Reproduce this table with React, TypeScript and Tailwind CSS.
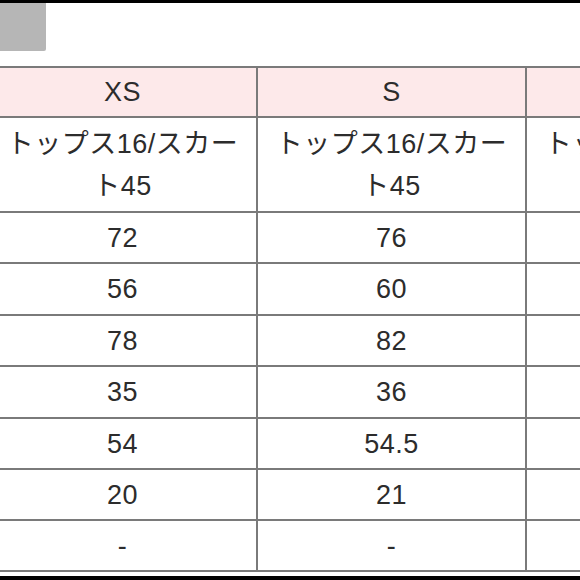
import React from "react";

const sizes = ["XS", "S", ""];
const rows: string[][] = [
  ["トップス16/スカート45", "トップス16/スカート45", "トップス16/スカート45"],
  ["72", "76", ""],
  ["56", "60", ""],
  ["78", "82", ""],
  ["35", "36", ""],
  ["54", "54.5", ""],
  ["20", "21", ""],
  ["-", "-", ""],
];
const heights = ["h-[95px]", "h-[51px]", "h-[52px]", "h-[51px]", "h-[52px]", "h-[51px]", "h-[51px]", "h-[51px]"];

export default function App() {
  return (
    <div
      className="w-[580px] h-[580px] overflow-hidden bg-white flex flex-col relative text-[#2c2c2c]"
      style={{ fontFamily: '"Liberation Sans", "Noto Sans CJK JP", sans-serif' }}
    >
      <div className="h-[3px] bg-black shrink-0" />
      <div className="h-[63px] shrink-0">
        <div className="w-[46px] h-[48px] bg-[#b6b6b6] rounded-br-[2px]" />
      </div>
      <div className="ml-[-13px] w-[809px] border-t-2 border-l-2 border-[#7a7a7a] grid grid-cols-[269px_269px_269px] shrink-0">
        {sizes.map((s, j) => (
          <div
            key={`h-${j}`}
            className="h-[50px] bg-[#fde9ea] border-r-2 border-b-2 border-[#7a7a7a] flex items-center justify-center text-[27px] tracking-[0.5px]"
          >
            {s}
          </div>
        ))}
        {rows.map((r, i) =>
          r.map((c, j) => (
            <div
              key={`${i}-${j}`}
              className={`${heights[i]} border-r-2 border-b-2 border-[#7a7a7a] flex items-center justify-center text-center text-[27px] tracking-[0.5px] leading-[42px] px-[14px]`}
            >
              {c}
            </div>
          ))
        )}
      </div>
      <div className="absolute left-0 right-0 bottom-0 h-[4px] bg-black" />
    </div>
  );
}
